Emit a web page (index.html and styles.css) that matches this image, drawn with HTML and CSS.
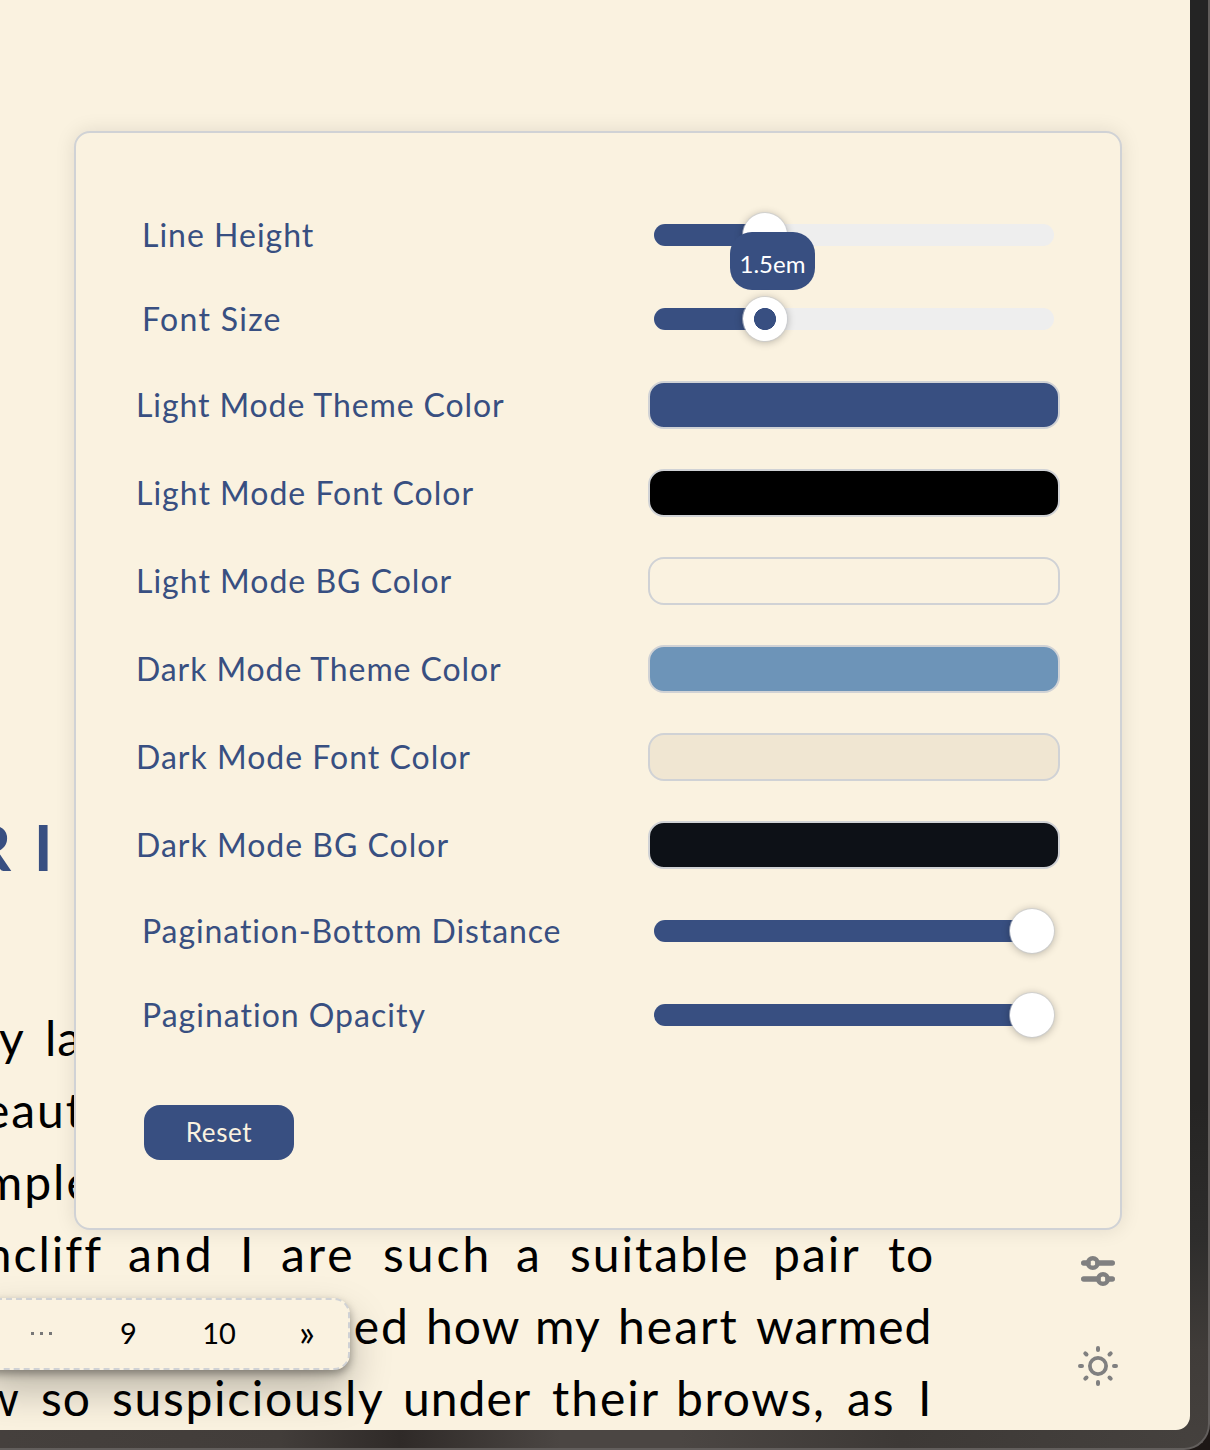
FILE: index.html
```html
<!DOCTYPE html>
<html lang="en">
<head>
<meta charset="utf-8">
<title>Reader settings</title>
<link rel="stylesheet" href="styles.css">
</head>
<body>
<div class="frame">
<main class="window">
  <article class="book">
    <h1 class="chapter">R I</h1>
    <p class="line line-1"><span class="mid">my</span><span>land</span></p>
    <p class="line line-2"><span class="mid">beautiful</span></p>
    <p class="line line-3"><span class="mid">completely</span></p>
    <p class="line line-4"><span class="mid first">Heathcliff</span><span class="wide">and</span><span>I</span><span class="wide">are</span><span class="wide">such</span><span>a</span><span class="mid">suitable</span><span class="mid">pair</span><span>to</span></p>
    <p class="line line-5"><span class="mid first">imagined</span><span>how</span><span>my</span><span class="mid">heart</span><span>warmed</span></p>
    <p class="line line-6"><span class="first">withdraw</span><span>so</span><span class="long">suspiciously</span><span>under</span><span class="mid">their</span><span class="long">brows,</span><span class="mid">as</span><span>I</span></p>
  </article>

  <section class="panel">
    <div class="row slide"><label>Line Height</label><div class="track"><div class="fill" style="width:111px"></div><div class="thumb" style="left:111px"></div><div class="tip">1.5em</div></div></div>
    <div class="row slide"><label class="loose">Font Size</label><div class="track"><div class="fill" style="width:111px"></div><div class="thumb active" style="left:111px"></div></div></div>
    <div class="row"><label class="tight">Light Mode Theme Color</label><div class="swatch light-theme"></div></div>
    <div class="row"><label>Light Mode Font Color</label><div class="swatch light-font"></div></div>
    <div class="row"><label>Light Mode BG Color</label><div class="swatch light-bg"></div></div>
    <div class="row"><label class="tight">Dark Mode Theme Color</label><div class="swatch dark-theme"></div></div>
    <div class="row"><label>Dark Mode Font Color</label><div class="swatch dark-font"></div></div>
    <div class="row"><label>Dark Mode BG Color</label><div class="swatch dark-bg"></div></div>
    <div class="row slide"><label class="tight">Pagination-Bottom Distance</label><div class="track"><div class="fill" style="width:378px"></div><div class="thumb" style="left:378px"></div></div></div>
    <div class="row slide"><label>Pagination Opacity</label><div class="track"><div class="fill" style="width:378px"></div><div class="thumb" style="left:378px"></div></div></div>
    <button class="reset">Reset</button>
  </section>

  <nav class="pages"><span class="more"><i></i><i></i><i></i></span><span>9</span><span>10</span><span class="next">»</span></nav>

  <div class="tools">
    <svg width="44" height="44" viewBox="0 0 44 44" fill="none" stroke="#808080" stroke-linecap="round"><path stroke-width="5.6" d="M7.8 14H12M22 14H36.2M7.8 30H22M32 30H36.2"/><circle cx="16.8" cy="14" r="4.8" stroke-width="4.4"/><circle cx="27" cy="30" r="4.8" stroke-width="4.4"/></svg>
    <svg width="44" height="44" viewBox="0 0 44 44" fill="none" stroke="#808080" stroke-width="4" stroke-linecap="round"><circle cx="22" cy="22" r="8.1" stroke-width="3.8"/><path d="M22 4V6M22 38V40M4 22H6M38 22H40M9.3 9.3L10.5 10.5M33.5 33.5L34.7 34.7M9.3 34.7L10.5 33.5M33.5 10.5L34.7 9.3"/></svg>
  </div>
</main>
</div>
</body>
</html>
```
FILE: styles.css
```css
* { box-sizing: border-box; }

body {
  margin: 0;
  width: 1210px;
  height: 1450px;
  overflow: hidden;
  background: #1d1715;
  font-family: Lato, "Open Sans", sans-serif;
}

.frame {
  width: 1210px;
  height: 1450px;
  border: solid #625e5c;
  border-width: 0 2px 2px 0;
  border-radius: 0 0 26px 0;
  background:
    linear-gradient(90deg, #45403d 0, #423d3a 280px, #2f2a28 400px, #4b4643 560px, #4b4643 680px, #3d3936 900px, #45413e 1190px) 0 1430px / 1190px 20px no-repeat,
    linear-gradient(#242424 0, #252423 1100px, #2e2d2c 1240px, #403c39 1350px, #45413e 1450px);
}

.window {
  position: relative;
  width: 1190px;
  height: 1430px;
  border-radius: 0 0 14px 0;
  background: #faf2e0;
  overflow: hidden;
}

.book { padding-top: 807px; }

.chapter {
  margin: 0 0 0 -30px;
  height: 195px;
  font-size: 64px;
  line-height: 80px;
  word-spacing: 7px;
  color: #384f81;
}

.line {
  margin: 0;
  display: grid;
  height: 72px;
  font-size: 48px;
  line-height: 72px;
  letter-spacing: 1px;
  white-space: nowrap;
  color: #000;
}
.long { letter-spacing: 1.7px; }
.mid { letter-spacing: 2px; }
.wide { letter-spacing: 3px; }
.first { justify-self: end; }
.line-1 { grid-template-columns: 87px auto; margin-left: -42px; }
.line-2 { margin-left: -45px; }
.line-3 { margin-left: -71px; }
.line-4 { grid-template-columns: 128px 112px 41px 102px 133px 54px 203px 115px auto; }
.line-4 .first { margin-right: 25px; }
.line-5 { grid-template-columns: 426px 109px 83px 138px auto; }
.line-5 .first { margin-right: 16px; }
.line-6 { grid-template-columns: 41px 71px 291px 149px 124px 171px 71px auto; }
.line-6 .first { margin-right: 21px; }

.panel {
  position: absolute;
  left: 74px;
  top: 131px;
  width: 1048px;
  height: 1099px;
  padding: 60px 60px 0;
  border: 2px solid #d0d2d5;
  border-radius: 16px;
  background: #faf2e0;
  box-shadow: 0 0 20px rgba(0, 0, 0, .1);
}

.row {
  display: flex;
  justify-content: space-between;
  align-items: center;
  height: 88px;
  font-size: 32px;
  letter-spacing: 1px;
  color: #384f81;
}
.row label { padding-bottom: 2px; }
.tight { letter-spacing: .9px; }
.loose { letter-spacing: 1.3px; }
.slide { height: 84px; padding: 0 6px; }

.track {
  position: relative;
  width: 400px;
  height: 22px;
  border-radius: 11px;
  background: #eee;
}
.fill { height: 22px; border-radius: 11px 0 0 11px; background: #384f81; }
.thumb {
  position: absolute;
  top: -11px;
  width: 44px;
  height: 44px;
  margin-left: -22px;
  border-radius: 50%;
  background: #fff;
  box-shadow: 0 0 0 1px rgba(200, 203, 210, .6), 0 1px 8px rgba(0, 0, 0, .3);
}
.active { background: radial-gradient(circle, #384f81 10.7px, #fff 11.3px); }
.tip {
  position: absolute;
  left: 76px;
  top: 8px;
  width: 85px;
  height: 58px;
  border-radius: 22px;
  background: #384f81;
  color: #fff;
  font-size: 24px;
  line-height: 64px;
  letter-spacing: 0;
  text-align: center;
}

.swatch {
  width: 412px;
  height: 48px;
  border: 2px solid #d0d2d5;
  border-radius: 16px;
}
.light-theme { background: #384f81; }
.light-font { background: #000; }
.light-bg { background: #faf2e0; }
.dark-theme { background: #6d94b8; }
.dark-font { background: #f0e6d2; }
.dark-bg { background: #0d1117; }

.reset {
  display: block;
  width: 150px;
  height: 55px;
  margin: 48px 0 0 8px;
  padding: 0 0 1px;
  border: 0;
  border-radius: 16px;
  background: #384f81;
  color: #faf2e0;
  font-family: inherit;
  font-size: 26px;
  letter-spacing: .6px;
}

.pages {
  position: absolute;
  left: -20px;
  top: 1298px;
  width: 370px;
  height: 72px;
  padding: 0 0 2px 18px;
  display: grid;
  grid-template-columns: 83px 91px 90px 86px;
  align-items: center;
  text-align: center;
  border: 2px dashed #d0d2d5;
  border-radius: 16px;
  background: #faf2e0;
  font-size: 29px;
  line-height: 36px;
  color: #000;
  box-shadow: 0 4px 8px rgba(0, 0, 0, .35), 0 20px 40px rgba(0, 0, 0, .25);
}
.more { display: flex; justify-content: center; gap: 6px; }
.more i { width: 3px; height: 3px; background: #777; }
.next { font-size: 37px; padding-bottom: 2px; }

.tools {
  position: absolute;
  left: 1076px;
  top: 1249px;
  display: flex;
  flex-direction: column;
  gap: 51px;
}
```
